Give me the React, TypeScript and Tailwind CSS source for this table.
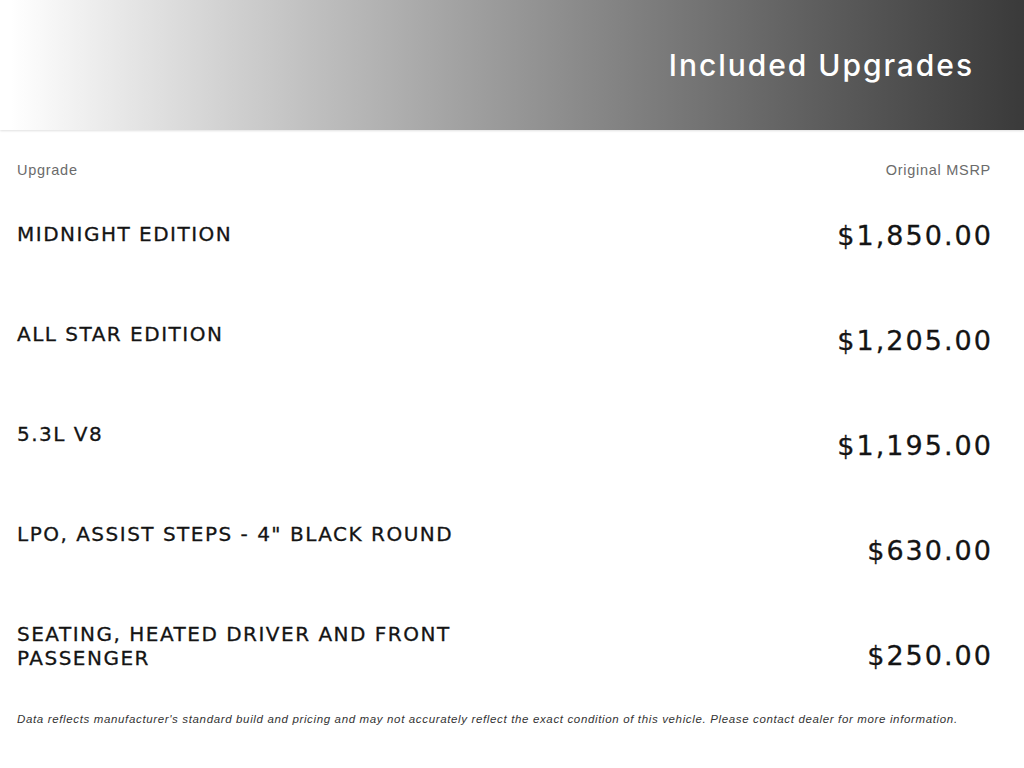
const upgrades = [
  { name: 'MIDNIGHT EDITION', price: '$1,850.00' },
  { name: 'ALL STAR EDITION', price: '$1,205.00' },
  { name: '5.3L V8', price: '$1,195.00' },
  { name: 'LPO, ASSIST STEPS - 4" BLACK ROUND', price: '$630.00' },
  { name: 'SEATING, HEATED DRIVER AND FRONT PASSENGER', price: '$250.00' },
];

export default function App() {
  return (
    <div className="min-h-[768px] w-[1024px] bg-white">
      {/* Banner */}
      <header className="flex h-[130px] items-center justify-end bg-linear-to-r from-white from-[1%] to-[#3a3a3a] pr-[50px] shadow-[0_1px_2px_rgba(0,0,0,0.12)]">
        <h1 className="font-['Inter',sans-serif] text-[30px] font-medium tracking-[0.065em] text-white">
          Included Upgrades
        </h1>
      </header>

      <div className="pl-[17px] pr-[33px]">
        {/* Column labels */}
        <div className="flex h-[80px] items-center justify-between pt-[1px] font-['Liberation_Sans',sans-serif] text-[14.5px] tracking-[0.05em] text-[#6b6b6b]">
          <span>Upgrade</span>
          <span>Original MSRP</span>
        </div>

        <div className="flex justify-between">
          {/* Upgrade names */}
          <div className="flex w-[480px] flex-col pt-[12px]">
            {upgrades.map((u) => (
              <div key={u.name} className="h-[100px]">
                <p className="w-[450px] font-['DejaVu_Sans',sans-serif] text-[20px] leading-[24px] tracking-[0.075em] text-[#141414] [-webkit-text-stroke:0.3px_#141414]">
                  {u.name}
                </p>
              </div>
            ))}
          </div>

          {/* Prices */}
          <div className="flex flex-col items-end pt-[10px]">
            {upgrades.map((u) => (
              <div key={u.price} className="h-[105px]">
                <span className="-mr-[2px] font-['DejaVu_Sans',sans-serif] text-[27px] leading-[32px] tracking-[0.075em] text-[#141414] [-webkit-text-stroke:0.3px_#141414]">
                  {u.price}
                </span>
              </div>
            ))}
          </div>
        </div>

        <p className="-mt-[34px] font-['Liberation_Sans',sans-serif] text-[11.5px] italic leading-[16px] tracking-[0.056em] text-[#333]">
          Data reflects manufacturer's standard build and pricing and may not accurately reflect the exact condition of this vehicle. Please contact dealer for more information.
        </p>
      </div>
    </div>
  );
}
